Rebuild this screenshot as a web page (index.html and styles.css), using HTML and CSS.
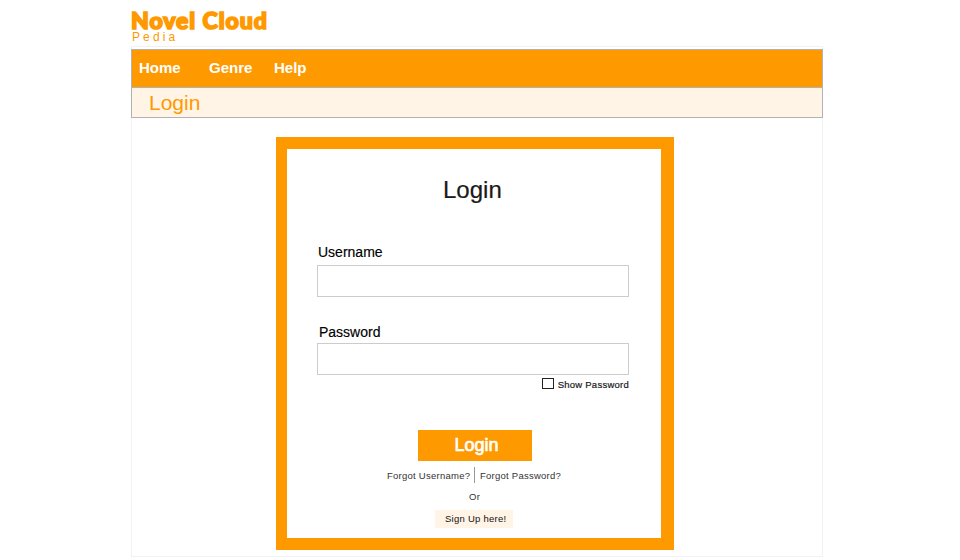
FILE: index.html
```html
<!DOCTYPE html>
<html lang="en">
<head>
<meta charset="utf-8">
<title>Novel Cloud Pedia - Login</title>
<link rel="stylesheet" href="styles.css">
</head>
<body>
<div class="page">
  <header class="brand">
    <div class="brand-name">Novel Cloud</div>
    <div class="brand-sub">Pedia</div>
  </header>
  <div class="frame">
    <nav class="nav">
      <a class="home">Home</a><a class="genre">Genre</a><a>Help</a>
    </nav>
    <div class="crumb">Login</div>
    <main class="card">
      <h1 class="title">Login</h1>
      <form class="form">
        <label class="label" for="user">Username</label>
        <input class="input" id="user" type="text">
        <label class="label label-pass" for="pass">Password</label>
        <input class="input" id="pass" type="password">
        <label class="show"><input class="check" type="checkbox"><span>Show Password</span></label>
      </form>
      <button class="button" type="button">Login</button>
      <div class="links"><a class="forgot-user">Forgot Username?</a><a class="forgot-pass">Forgot Password?</a></div>
      <div class="or">Or</div>
      <a class="signup">Sign Up here!</a>
    </main>
  </div>
</div>
</body>
</html>
```
FILE: styles.css
```css
* { box-sizing: border-box; }
body {
  margin: 0;
  background: #fff;
  font-family: "Liberation Sans", Arial, sans-serif;
}
.page { width: 692px; margin-left: 131px; }
.brand { height: 46px; padding-top: 9px; color: #f90; }
.brand-name {
  height: 22px;
  font: 900 23px/22px Lato, sans-serif;
  letter-spacing: 0.95px;
  white-space: nowrap;
  -webkit-text-stroke: 1.7px #f90;
}
.brand-sub { padding-left: 1px; font-size: 12px; line-height: 13px; letter-spacing: 3.1px; }
.frame {
  height: 511px;
  border: 1px solid #f2f2f2;
  padding-top: 2px;
}
.nav, .crumb { margin: 0 -1px; border: 1px solid #b2b2b2; }
.nav {
  display: flex;
  height: 39px;
  padding-left: 7px;
  border-bottom: 0;
  background: #f90;
  color: #fff;
  font-size: 15px;
  font-weight: bold;
  line-height: 36px;
}
.home { width: 70px; }
.genre { width: 65px; }
.crumb {
  height: 31px;
  margin-top: -1px;
  padding-left: 17px;
  background: #fff4e6;
  color: #f90;
  font-size: 21px;
  line-height: 29px;
}
.card {
  display: flex;
  flex-direction: column;
  width: 398px;
  height: 413px;
  margin: 19px 0 0 144px;
  border: 12px solid #f90;
  border-left-width: 11px;
  border-right-width: 13px;
}
.title {
  margin: 27px 0 0 156px;
  font-size: 24px;
  font-weight: normal;
  line-height: 28px;
  color: #1a1a1a;
  -webkit-text-stroke: 0.2px #1a1a1a;
}
.form { display: flex; flex-direction: column; width: 312px; margin: 40px 0 0 30px; }
.label { height: 21px; padding-left: 1px; font-size: 14px; line-height: 16px; color: #000; -webkit-text-stroke: 0.15px #000; }
.label-pass { height: 19px; margin-top: 27px; padding-left: 2px; }
.input { height: 32px; border: 1px solid #ccc; background: #fff; outline: 0; }
.show {
  display: flex;
  justify-content: flex-end;
  margin-top: 3px;
  gap: 4px;
  font-size: 9.5px;
  letter-spacing: 0.25px;
  line-height: 13px;
  color: #1a1a1a;
  -webkit-text-stroke: 0.2px #1a1a1a;
}
.check { appearance: none; width: 12px; height: 11px; margin: 0; border: 1px solid #222; }
.button {
  width: 114px;
  height: 31px;
  margin: 39px 0 0 131px;
  padding: 0 0 0 3px;
  border: 0;
  background: #f90;
  color: #fff;
  font: 18px/31px "Liberation Sans", Arial, sans-serif;
  -webkit-text-stroke: 0.7px #fff;
}
.links {
  display: flex;
  height: 16px;
  margin: 6px 0 0 100px;
  font-size: 9.5px;
  letter-spacing: 0.25px;
  line-height: 17px;
  color: #333;
  white-space: nowrap;
}
.forgot-user { width: 88px; border-right: 1px solid #999; }
.forgot-pass { padding-left: 5px; }
.or { margin: 8px 0 0 182px; font-size: 9.5px; letter-spacing: 0.25px; line-height: 12px; color: #333; }
.signup {
  width: 78px;
  height: 18px;
  margin: 7px 0 0 148px;
  padding-left: 10px;
  background: #fff4e6;
  font-size: 9.5px;
  letter-spacing: 0.25px;
  line-height: 18px;
  color: #111;
}
```
